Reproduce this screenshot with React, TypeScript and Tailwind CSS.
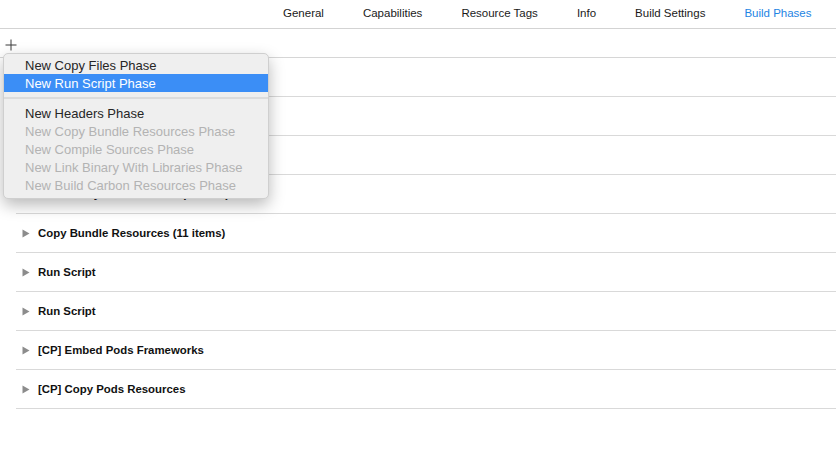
import React from 'react';

const tabs = ['General', 'Capabilities', 'Resource Tags', 'Info', 'Build Settings', 'Build Phases'];

const phases = [
    'Target Dependencies (0 items)',
    '[CP] Check Pods Manifest.lock',
    'Compile Sources (24 items)',
    'Link Binary With Libraries (3 items)',
    'Copy Bundle Resources (11 items)',
    'Run Script',
    'Run Script',
    '[CP] Embed Pods Frameworks',
    '[CP] Copy Pods Resources',
];

const menuTop = [
    { label: 'New Copy Files Phase', enabled: true },
    { label: 'New Run Script Phase', enabled: true, active: true },
];

const menuBottom = [
    { label: 'New Headers Phase', enabled: true },
    { label: 'New Copy Bundle Resources Phase', enabled: false },
    { label: 'New Compile Sources Phase', enabled: false },
    { label: 'New Link Binary With Libraries Phase', enabled: false },
    { label: 'New Build Carbon Resources Phase', enabled: false },
];

const Disclosure: React.FC = () => (
    <svg width="8" height="9" viewBox="0 0 8 9" className="shrink-0">
        <path d="M0.5 0.5 L7.5 4.5 L0.5 8.5 Z" fill="#8c8c8c" />
    </svg>
);

const MenuItem: React.FC<{ label: string; enabled: boolean; active?: boolean }> = ({ label, enabled, active }) => (
    <div
        className={`h-[18px] flex items-center pl-[21px] text-[13px] leading-none ${
            active ? 'bg-[#3b8ef6] text-white' : enabled ? 'text-[#262626]' : 'text-[#b3b3b3]'
        }`}
    >
        {label}
    </div>
);

const App: React.FC = () => {
    return (
        <div className="relative w-[836px] h-[452px] bg-white overflow-hidden" style={{ fontFamily: '"Liberation Sans", Arial, sans-serif' }}>
            {/* tab bar */}
            <div className="h-[29px] border-b border-[#d3d3d3] flex items-center pl-[283px] gap-[39px] text-[11.5px] pb-[1px]">
                {tabs.map((tab) => (
                    <span key={tab} className={tab === 'Build Phases' ? 'text-[#2384e3]' : 'text-[#1a1a1a]'}>
                        {tab}
                    </span>
                ))}
            </div>

            {/* filter bar */}
            <div className="h-[29px] border-b border-[#d6d6d6] flex items-start pl-[5px] pt-[10px]">
                <svg width="12" height="12" viewBox="0 0 12 12">
                    <path d="M6 0.5 V11.5 M0.5 6 H11.5" stroke="#3a3a3a" strokeWidth="1" />
                </svg>
            </div>

            {/* phases */}
            <div className="ml-4">
                {phases.map((phase, i) => (
                    <div key={i} className="h-[39px] border-b border-[#d9d9d9] flex items-center gap-[8px] pl-[6px] pt-[1px]">
                        <Disclosure />
                        <span className="text-[11.4px] font-bold text-[#111]">{phase}</span>
                    </div>
                ))}
            </div>

            {/* add phase menu */}
            <div className="absolute left-[3px] top-[53px] w-[266px] rounded-[5px] bg-[#efefef] border border-[#cfcfcf] shadow-[0_6px_16px_rgba(0,0,0,0.28)] pt-[2px] pb-[4px]">
                {menuTop.map((item) => (
                    <MenuItem key={item.label} {...item} />
                ))}
                <div className="my-[5px] h-[2px] bg-[#dcdcdc]" />
                {menuBottom.map((item) => (
                    <MenuItem key={item.label} {...item} />
                ))}
            </div>
        </div>
    );
};

export default App;
